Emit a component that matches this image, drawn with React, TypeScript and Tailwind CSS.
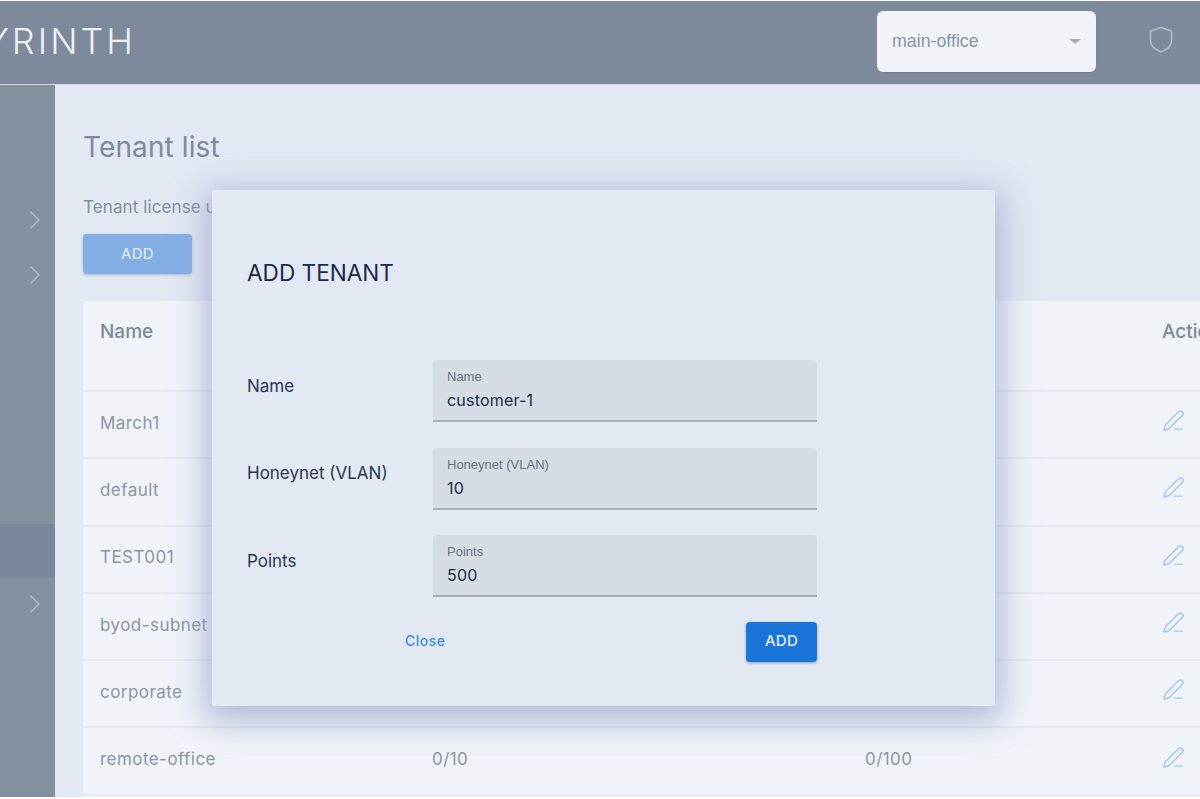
import { PenLine, ChevronRight } from "lucide-react";

const inter = "font-['Inter',sans-serif]";

function Chevron() {
  return <ChevronRight size={32} strokeWidth={1.1} className="text-[#b4bbc3]" />;
}

function Field({ label, value }: { label: string; value: string }) {
  return (
    <div className="w-[384px] h-[62px] bg-[#d5dce4] rounded-t border-b-2 border-[#a9b0bb] px-[14px] pt-[10px]">
      <div className="text-[13px] leading-[14px] text-[#69727f] font-['Liberation_Sans',sans-serif]">{label}</div>
      <div className="text-[16px] leading-[24px] mt-[4px] text-[#1c2a44] tracking-[0.2px]">{value}</div>
    </div>
  );
}

function FormRow({ label, value }: { label: string; value: string }) {
  return (
    <div className="flex items-center h-[62px] mb-[25.5px]">
      <div className="w-[186px] text-[17px] text-[#2a3650] -mt-[9px]">{label}</div>
      <Field label={label} value={value} />
    </div>
  );
}

function Row({ name, a, b }: { name: string; a?: string; b?: string }) {
  return (
    <div className="grid grid-cols-[332px_433px_297px_1fr] items-center h-[67.3px] pl-[17px] border-b-2 border-[#e4e9f2] text-[17px] text-[#8b95a5] tracking-[0.45px] shrink-0">
      <div className="-mt-[2px]">{name}</div>
      <div className="-mt-[2px]">{a}</div>
      <div className="-mt-[2px]">{b}</div>
      <div><PenLine size={23} strokeWidth={1.5} className="text-[#a3c6f2] -mt-[8px]" /></div>
    </div>
  );
}

export default function App() {
  return (
    <div className={`relative w-[1200px] h-[799px] overflow-hidden bg-white pt-px pb-[2px] flex flex-col ${inter}`}>
      <header className="h-[84px] shrink-0 bg-[#7e8a9c] border-b border-[#d5dae3] flex items-center">
        <div className="w-[135px] h-full flex items-center justify-end overflow-hidden shrink-0">
          <span className="text-[36px] font-light text-[#eef1f4] tracking-[3px] whitespace-nowrap leading-none -mt-[3px] -mr-[1px] shrink-0">LABYRINTH</span>
        </div>
        <div className="ml-[742px] w-[219px] h-[61px] bg-[#f0f4f9] rounded-[6px] flex items-center justify-between pl-[15px] pr-[14px] -mt-[2px] text-[17.8px] text-[#8a94a3] font-['Liberation_Sans',sans-serif] shadow-[0_1px_1px_rgba(60,70,90,0.2)]">
          <span>main-office</span>
          <span className="w-0 h-0 border-x-[6px] border-x-transparent border-t-[5px] border-t-[#a7afba] mr-[1px]" />
        </div>
        <svg className="ml-[53px] -mt-[6px]" width="24" height="28" viewBox="0 0 24 28" fill="none" stroke="#b6bdc6" strokeWidth="1.6" strokeLinejoin="round">
          <path d="M12 1.5 L22.5 5 V15 C22.5 20 17 24 12 26 C7 24 1.5 20 1.5 15 V5 Z" />
        </svg>
      </header>
      <div className="flex flex-1 min-h-0">
        <aside className="w-[55px] shrink-0 bg-[#83909e] flex flex-col pt-[107px]">
          <div className="h-[55px] flex items-center justify-end pr-[4px]"><Chevron /></div>
          <div className="h-[55px] flex items-center justify-end pr-[4px]"><Chevron /></div>
          <div className="h-[222px]" />
          <div className="h-[54px] bg-[#7b889c]" />
          <div className="h-[52px] flex items-center justify-end pr-[4px]"><Chevron /></div>
        </aside>
        <main className="flex-1 min-w-0 bg-[#e2e9f3] pl-[28px] pt-[43px] flex flex-col overflow-hidden">
          <h1 className="text-[28px] leading-[38px] text-[#7e8a9a] tracking-[0.1px]">Tenant list</h1>
          <p className="mt-[31px] text-[17px] leading-[20px] text-[#828d9c] tracking-[0.1px]">Tenant license usage</p>
          <button className="mt-[17px] w-[109px] h-[40px] rounded bg-[#84afe5] text-[15px] text-[#e6edf6] tracking-[0.3px] shadow-[0_1px_3px_rgba(70,80,110,0.35)]">ADD</button>
          <div className="mt-[27px] w-[1200px] bg-[#f0f4f9] rounded-t flex flex-col flex-1">
            <div className="h-[91px] shrink-0 grid grid-cols-[1062px_1fr] pl-[17px] pt-[17px] border-b-2 border-[#e4e9f2] text-[19px] font-medium text-[#7e8998]">
              <div>Name</div>
              <div>Actions</div>
            </div>
            <Row name="March1" />
            <Row name="default" />
            <Row name="TEST001" />
            <Row name="byod-subnet" />
            <Row name="corporate" />
            <Row name="remote-office" a="0/10" b="0/100" />
          </div>
        </main>
      </div>

      <div className="absolute left-[212px] top-[190px] w-[783px] h-[516px] bg-[#e2e9f3] rounded-[2px] shadow-[0_8px_32px_8px_rgba(150,156,200,0.65)] pl-[35px]">
        <h2 className="mt-[68px] text-[22.6px] leading-[30px] text-[#1c2a4a]">ADD TENANT</h2>
        <div className="mt-[72px]">
          <FormRow label="Name" value="customer-1" />
          <FormRow label="Honeynet (VLAN)" value="10" />
          <FormRow label="Points" value="500" />
        </div>
        <div className="flex items-center w-[570px] -mt-[1px] pl-[158px] justify-between">
          <span className="text-[14px] font-medium text-[#3f8ddd] tracking-[0.5px] -mt-[2px]">Close</span>
          <button className="w-[71px] h-[40px] rounded bg-[#1976d8] text-[15px] font-medium text-[#e2ecf8] tracking-[0.3px] shadow-[0_1px_3px_rgba(40,60,110,0.45)]">ADD</button>
        </div>
      </div>
    </div>
  );
}
